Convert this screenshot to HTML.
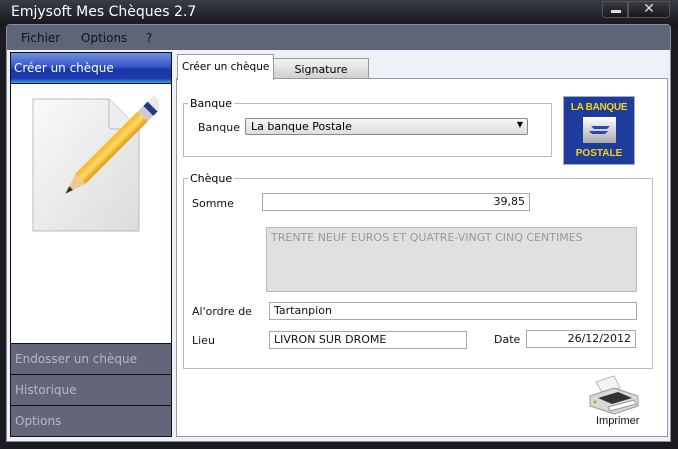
<!DOCTYPE html>
<html><head><meta charset="utf-8"><style>
*{margin:0;padding:0;box-sizing:border-box}
body{width:678px;height:449px;overflow:hidden;background:#1a1c22;font-family:"DejaVu Sans","Liberation Sans",sans-serif;font-size:11px;position:relative}
.a{position:absolute;white-space:nowrap}
.title{left:0;top:0;width:678px;height:26px;background:linear-gradient(#3a3d46,#14161b);}
.frame{left:6px;top:24px;width:665px;height:418px;background:#eef2f8;border:1px solid #8a8e9c;border-radius:4px 4px 0 0}
.menu{left:7px;top:25px;width:663px;height:25px;background:#5f6579;color:#111;font-size:12px}
.lp{left:10px;top:52px;width:162px;height:385px;background:#fff;border:1px solid #111}
.item{left:0;width:160px;height:31px;background:#63667a;border-top:1px solid #111;color:#b5b9c6;font-size:12px;padding:8px 0 0 4px}
.inp{background:#fff;border:1px solid #a9a9a9;font-size:11px;color:#111;padding:1px 4px}
.lbl{font-size:11px;color:#111}
fieldset{position:absolute;border:1px solid #bbb}
legend{font-size:11px;padding:0 2px;margin-left:4px}
</style></head><body>
<div class="a title"></div>
<div class="a" style="left:11px;top:4px;color:#fff;font-size:14px;font-family:'DejaVu Sans',sans-serif">Emjysoft Mes Chèques 2.7</div>
<div class="a" style="left:602px;top:1px;width:26px;height:17px;border:1px solid #555;border-radius:0 0 0 4px;background:linear-gradient(#3a3c44,#15171c)"><div class="a" style="left:8px;top:8px;width:10px;height:3px;background:#ddd"></div></div>
<div class="a" style="left:628px;top:1px;width:42px;height:17px;border:1px solid #555;border-radius:0 0 4px 0;background:linear-gradient(#3a3c44,#15171c);color:#ddd;font-weight:bold;font-size:14px;text-align:center;line-height:15px">✕</div>
<div class="a frame"></div>
<div class="a menu"><span class="a" style="left:14px;top:6px">Fichier</span><span class="a" style="left:74px;top:6px">Options</span><span class="a" style="left:139px;top:6px">?</span></div>
<div class="a lp">
 <div class="a" style="left:0;top:0;width:160px;height:31px;background:linear-gradient(#7191e0,#3657c9 45%,#1b36a4 55%,#1b39ae 85%,#35a8e8);color:#fff;font-size:12px;padding:8px 0 0 3px;border-bottom:1px solid #111">Créer un chèque</div>
 <svg class="a" style="left:18px;top:36px" width="130" height="145" viewBox="0 0 130 145">
  <defs><linearGradient id="pg" x1="0" y1="0" x2="1" y2="1"><stop offset="0" stop-color="#fafafa"/><stop offset="1" stop-color="#dcdcdc"/></linearGradient>
  <linearGradient id="pc" x1="0" y1="0" x2="1" y2="0"><stop offset="0" stop-color="#f5b51c"/><stop offset=".5" stop-color="#ffd96a"/><stop offset="1" stop-color="#e29a10"/></linearGradient></defs>
  <path d="M4 10 H80 L110 40 V142 H4 Z" fill="url(#pg)" stroke="#bbb"/>
  <path d="M80 10 V36 Q80 40 84 40 H110" fill="#eee" stroke="#bbb"/>
  <g transform="translate(8 10) scale(0.88) rotate(45 72 68)"><rect x="64" y="0" width="16" height="100" fill="url(#pc)"/><rect x="64" y="-16" width="16" height="7" fill="#223a8a"/><rect x="64" y="-9" width="16" height="9" fill="#ccc"/><rect x="64" y="-26" width="16" height="10" rx="2" fill="#e8e8e8"/><path d="M64 100 L72 124 L80 100 Z" fill="#f0c890"/><path d="M69 115 L72 124 L75 115 Z" fill="#333"/></g>
 </svg>
 <div class="a item" style="top:290px">Endosser un chèque</div>
 <div class="a item" style="top:321px">Historique</div>
 <div class="a item" style="top:352px">Options</div>
</div>
<div class="a" style="left:176px;top:78px;width:492px;height:359px;background:#fff;border:1px solid #999"></div>
<div class="a" style="left:273px;top:58px;width:96px;height:21px;background:linear-gradient(#f4f4f4,#d0d0d0);border:1px solid #999;font-size:11px;text-align:center;padding-top:4px">Signature</div>
<div class="a" style="left:177px;top:54px;width:97px;height:26px;background:#fff;border:1px solid #999;border-bottom:none;font-size:10.5px;padding:6px 0 0 4px;overflow:hidden">Créer un chèque</div>
<fieldset style="left:183px;top:97px;width:369px;height:60px"><legend>Banque</legend></fieldset>
<div class="a lbl" style="left:198px;top:121px">Banque</div>
<div class="a" style="left:245px;top:118px;width:283px;height:17px;border:1px solid #888;border-radius:2px;background:linear-gradient(#f6f6f6,#ddd);font-size:11px;padding:1px 5px">La banque Postale<span class="a" style="right:4px;top:1px;font-size:8px">▼</span></div>
<div class="a" style="left:563px;top:96px;width:72px;height:69px;background:#1e3c9e;border:1px solid #aab">
 <div class="a" style="left:0;top:5px;width:70px;text-align:center;color:#f7d417;font-weight:bold;font-size:10px;font-family:'Liberation Sans',sans-serif;letter-spacing:-0.3px">LA BANQUE</div>
 <div class="a" style="left:19px;top:20px;width:33px;height:26px;background:linear-gradient(#fff,#aaa)"><svg width="33" height="26"><path d="M8 9 H27 L24 12 H11 Z M6 14 H25 L22 17 H9 Z" fill="#2a46b8"/></svg></div>
 <div class="a" style="left:0;top:51px;width:70px;text-align:center;color:#f7d417;font-weight:bold;font-size:10px;font-family:'Liberation Sans',sans-serif">POSTALE</div>
</div>
<fieldset style="left:183px;top:172px;width:470px;height:197px"><legend>Chèque</legend></fieldset>
<div class="a lbl" style="left:192px;top:197px">Somme</div>
<div class="a inp" style="left:262px;top:193px;width:268px;height:18px;text-align:right">39,85</div>
<div class="a" style="left:266px;top:227px;width:371px;height:65px;background:#e0e0e0;border:1px solid #b8b8b8;color:#999;font-size:11px;padding:3px 4px">TRENTE NEUF EUROS ET QUATRE-VINGT CINQ CENTIMES</div>
<div class="a lbl" style="left:192px;top:305px">Al'ordre de</div>
<div class="a inp" style="left:269px;top:302px;width:368px;height:18px">Tartanpion</div>
<div class="a lbl" style="left:192px;top:334px">Lieu</div>
<div class="a inp" style="left:269px;top:331px;width:198px;height:18px">LIVRON SUR DROME</div>
<div class="a lbl" style="left:494px;top:333px">Date</div>
<div class="a inp" style="left:526px;top:330px;width:110px;height:18px;text-align:right">26/12/2012</div>
<svg class="a" style="left:588px;top:374px" width="52" height="42" viewBox="0 0 52 42">
 <path d="M8 8 L26 2 L32 14 L14 18 Z" fill="#f4f4f4" stroke="#bbb"/>
 <path d="M2 22 L26 14 L50 22 L50 32 L26 40 L2 32 Z" fill="#d8d8d8" stroke="#999"/>
 <path d="M10 24 L30 18 L44 24 L24 30 Z" fill="#333"/>
 <circle cx="7" cy="28" r="1.5" fill="#6c3"/>
 <path d="M20 33 L46 26 L48 30 L22 37 Z" fill="#fff" stroke="#999"/>
</svg>
<div class="a" style="left:596px;top:415px;font-size:11px;color:#111;font-family:'Liberation Sans',sans-serif">Imprimer</div>
</body></html>
